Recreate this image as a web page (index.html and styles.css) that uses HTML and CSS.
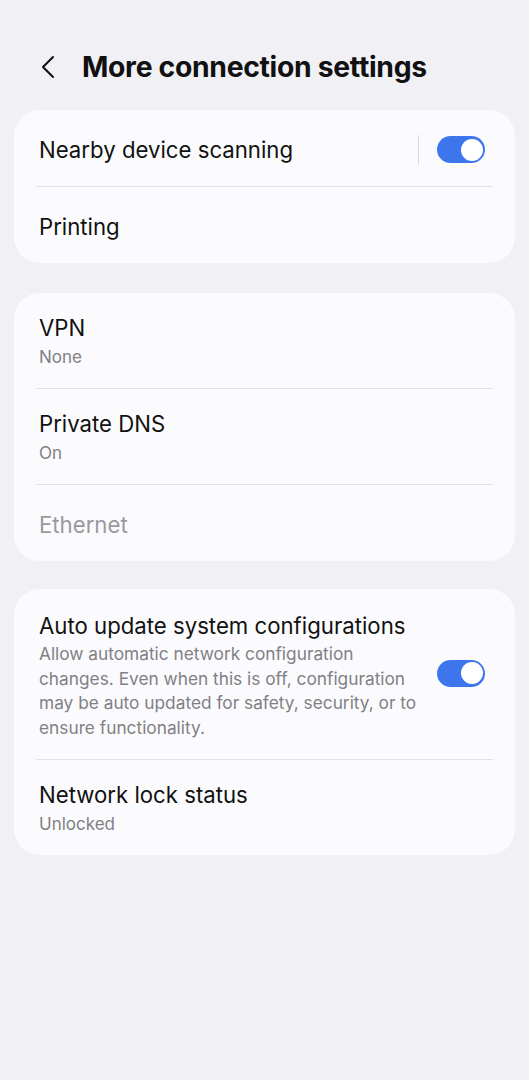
FILE: index.html
```html
<!DOCTYPE html>
<html lang="en">
<head>
<meta charset="utf-8">
<title>More connection settings</title>
<link rel="stylesheet" href="styles.css">
</head>
<body>
<div class="screen">
  <header class="appbar">
    <svg class="back" width="16" height="24" viewBox="0 0 16 24"><path d="M13 2 L3 12 L13 22" fill="none" stroke="#111" stroke-width="2" stroke-linecap="round" stroke-linejoin="round"/></svg>
    <h1 class="title">More connection settings</h1>
  </header>

  <section class="card card-first">
    <div class="row row-short">
      <div class="text"><div class="label">Nearby device scanning</div></div>
      <div class="vline"></div>
      <div class="switch"><div class="knob"></div></div>
    </div>
    <div class="sep"></div>
    <div class="row row-short">
      <div class="text"><div class="label">Printing</div></div>
    </div>
  </section>

  <section class="card">
    <div class="row row-tall">
      <div class="text"><div class="label">VPN</div><div class="sub">None</div></div>
    </div>
    <div class="sep"></div>
    <div class="row row-tall">
      <div class="text"><div class="label">Private DNS</div><div class="sub">On</div></div>
    </div>
    <div class="sep"></div>
    <div class="row row-short">
      <div class="text"><div class="label disabled">Ethernet</div></div>
    </div>
  </section>

  <section class="card">
    <div class="row row-auto">
      <div class="text">
        <div class="label">Auto update system configurations</div>
        <div class="sub desc">Allow automatic network configuration changes. Even when this is off, configuration may be auto updated for safety, security, or to ensure functionality.</div>
      </div>
      <div class="switch switch-raised"><div class="knob"></div></div>
    </div>
    <div class="sep"></div>
    <div class="row row-tall">
      <div class="text"><div class="label">Network lock status</div><div class="sub">Unlocked</div></div>
    </div>
  </section>
</div>
</body>
</html>
```
FILE: styles.css
```css
html, body {
  margin: 0;
  padding: 0;
  background: #f0f0f5;
}
body {
  font-family: Inter, "Noto Sans", "Liberation Sans", sans-serif;
  color: #111;
  width: 529px;
  height: 1080px;
}
.screen {
  display: flex;
  flex-direction: column;
  padding: 0 14px;
}
.appbar {
  display: flex;
  align-items: center;
  box-sizing: border-box;
  height: 110px;
  padding-top: 24px;
  padding-left: 26px;
  gap: 26px;
}
.back { flex: none; }
.title {
  margin: 0;
  font-size: 28.3px;
  font-weight: 700;
  letter-spacing: -0.3px;
}
.card {
  background: #fbfbfd;
  border-radius: 26px;
  margin-bottom: 28px;
  display: flex;
  flex-direction: column;
}
.card-first { margin-bottom: 30px; }
.row {
  display: flex;
  align-items: center;
  box-sizing: border-box;
  padding: 0 30px 0 25px;
}
.row-short { height: 76px; padding-top: 3px; }
.row-tall { height: 95px; }
.row-auto { padding-top: 23px; padding-bottom: 19px; }
.text { flex: 1; min-width: 0; }
.label {
  font-size: 22.2px;
  line-height: 28px;
  color: #111;
}
.label.disabled { color: #9a9a9e; }
.sub {
  font-size: 17px;
  line-height: 22px;
  color: #808085;
  margin-top: 4px;
}
.desc {
  font-size: 17.3px;
  line-height: 24.5px;
  padding-right: 17px;
  margin-top: 2px;
}
.sep {
  height: 1px;
  background: #e2e2e6;
  margin: 0 22px;
}
.vline {
  width: 1px;
  height: 30px;
  background: #d8d8dc;
  margin-right: 18px;
}
.switch {
  flex: none;
  width: 48px;
  height: 27px;
  border-radius: 14px;
  background: #3d76ec;
  position: relative;
}
.switch-raised { margin-bottom: 6px; }
.knob {
  position: absolute;
  right: 2.5px;
  top: 2.5px;
  width: 22px;
  height: 22px;
  border-radius: 50%;
  background: #fff;
}
```
